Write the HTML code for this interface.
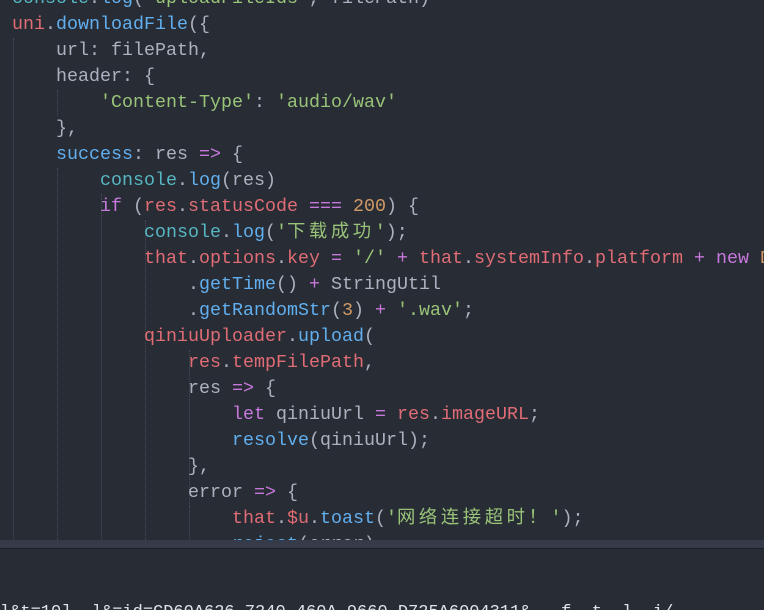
<!DOCTYPE html>
<html><head><meta charset="utf-8"><style>
html,body{margin:0;padding:0;width:764px;height:610px;overflow:hidden;background:#282c34;}
#wrap{position:relative;width:764px;height:610px;overflow:hidden;}
#ed{position:absolute;left:0;top:0;width:764px;height:540px;overflow:hidden;background:#282c34;}
#code{position:absolute;left:12px;top:-14px;font-family:"Liberation Mono","Noto Sans CJK SC",monospace;font-size:18.33px;line-height:26px;color:#abb2bf;white-space:pre;}
.r{color:#e06c75}.b{color:#61afef}.c{color:#56b6c2}.g{color:#98c379}.p{color:#c678dd}.o{color:#d19a66}
.cj{letter-spacing:3.6px}
.gd{position:absolute;width:0;border-left:1px dotted #464c57;}
#bar{position:absolute;left:0;top:540px;width:764px;height:8px;background:#353b48;border-bottom:1px solid #1b1e23;}
#bot{position:absolute;left:0;top:549px;width:764px;height:61px;overflow:hidden;}
#bt{position:absolute;left:0;top:54px;font-family:"Liberation Mono",monospace;font-size:17px;color:#dfe3ea;white-space:pre;line-height:20px;}
</style></head><body><div id="wrap">
<div id="ed">
<div class="gd" style="left:13px;top:38px;height:502px"></div>
<div class="gd" style="left:57px;top:90px;height:26px"></div>
<div class="gd" style="left:57px;top:168px;height:372px"></div>
<div class="gd" style="left:101px;top:194px;height:346px"></div>
<div class="gd" style="left:145px;top:220px;height:320px"></div>
<div class="gd" style="left:189px;top:350px;height:190px"></div>
<div class="gd" style="left:189px;top:506px;height:34px"></div>
<div id="code"><span class="c">console</span>.<span class="b">log</span>(<span class="g">'uploadFileIds'</span>, filePath)
<span class="r">uni</span>.<span class="b">downloadFile</span>({
    url: filePath,
    header: {
        <span class="g">'Content-Type'</span>: <span class="g">'audio/wav'</span>
    },
    <span class="b">success</span>: res <span class="p">=&gt;</span> {
        <span class="c">console</span>.<span class="b">log</span>(res)
        <span class="p">if</span> (<span class="r">res</span>.<span class="r">statusCode</span> <span class="p">===</span> <span class="o">200</span>) {
            <span class="c">console</span>.<span class="b">log</span>(<span class="g">'<span class="cj">下载成功</span>'</span>);
            <span class="r">that</span>.<span class="r">options</span>.<span class="r">key</span> <span class="p">=</span> <span class="g">'/'</span> <span class="p">+</span> <span class="r">that</span>.<span class="r">systemInfo</span>.<span class="r">platform</span> <span class="p">+</span> <span class="p">new</span> <span class="o">D</span>
                .<span class="b">getTime</span>() <span class="p">+</span> StringUtil
                .<span class="b">getRandomStr</span>(<span class="o">3</span>) <span class="p">+</span> <span class="g">'.wav'</span>;
            <span class="r">qiniuUploader</span>.<span class="b">upload</span>(
                <span class="r">res</span>.<span class="r">tempFilePath</span>,
                res <span class="p">=&gt;</span> {
                    <span class="p">let</span> qiniuUrl <span class="p">=</span> <span class="r">res</span>.<span class="r">imageURL</span>;
                    <span class="b">resolve</span>(qiniuUrl);
                },
                error <span class="p">=&gt;</span> {
                    <span class="r">that</span>.<span class="r">$u</span>.<span class="b">toast</span>(<span class="g">'<span class="cj">网络连接超时！</span>'</span>);
                    <span class="b">reject</span>(error)
</div>
</div>
<div id="bar"></div>
<div id="bot"><div id="bt">l&amp;t=10]  l&amp;=id=CD60A626-7240-460A-9660-D725A6004311&amp;   f  t  l  i/</div></div>
</div></body></html>
